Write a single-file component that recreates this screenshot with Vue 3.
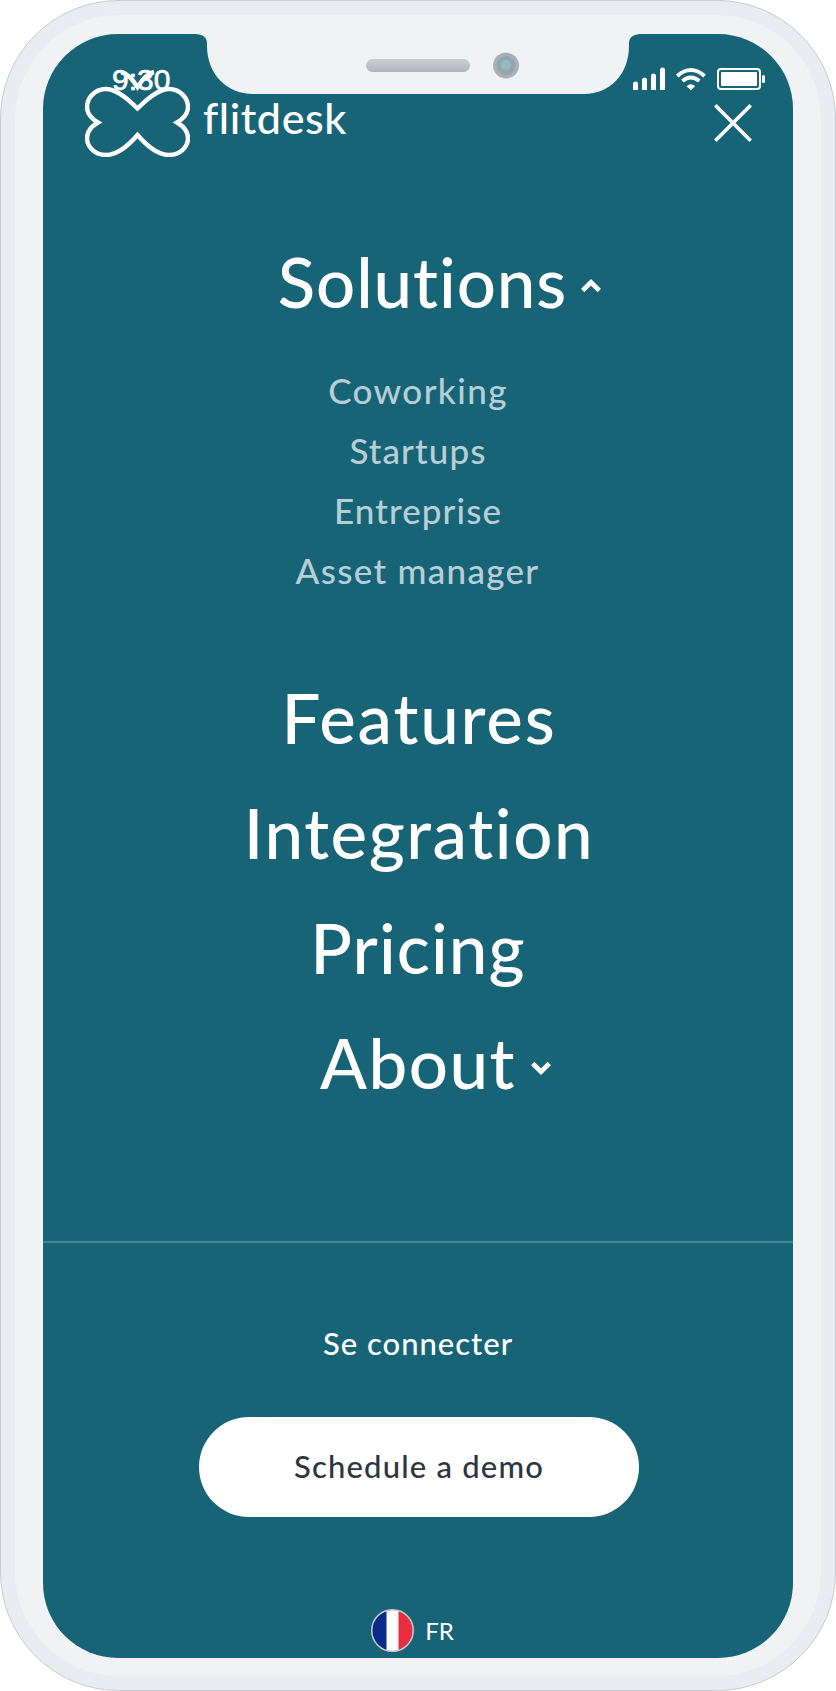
<script setup>
const solutions = [
  { label: 'Coworking', key: 'coworking' },
  { label: 'Startups', key: 'startups' },
  { label: 'Entreprise', key: 'entreprise' },
  { label: 'Asset manager', key: 'asset' },
]
const pages = [
  { label: 'Features', key: 'features' },
  { label: 'Integration', key: 'integration' },
  { label: 'Pricing', key: 'pricing' },
  { label: 'About', key: 'about', more: true },
]
</script>

<template>
  <div class="phone">
    <div class="bezel">
      <div class="screen">
        <header class="header">
          <div class="brand">
            <svg class="logo" width="105" height="90" viewBox="0 0 105 90" fill="none" stroke="#fff" stroke-width="4.400">
              <path d="M52.500 41.500 C43 32 32 22 21 22 C10 22 2 31 2 40 C2 47 7 52 13 55.500 C7 59 2 64 2 71 C2 80 10 88 21 88 C32 88 43 79 52.500 68 C62 79 73 88 84 88 C95 88 103 80 103 71 C103 64 98 59 92 55.500 C98 52 103 47 103 40 C103 31 95 22 84 22 C73 22 62 32 52.500 41.500Z" />
              <path d="M36 5 C43 6.500 48 13 52.500 20 C57 13 62 6.500 69 5" />
            </svg>
            <span class="wordmark">flitdesk</span>
          </div>
          <svg class="close" width="38" height="38" viewBox="0 0 38 38" stroke="#fff" stroke-width="3.600">
            <path d="M1.300 1.300 36.700 36.700M36.700 1.300 1.300 36.700" />
          </svg>
        </header>

        <nav class="menu">
          <a class="item open solutions"><span>Solutions</span>
            <svg class="chevron" width="20" height="14" viewBox="0 0 20 14"><path d="M1.700 11.500 10 3.300 18.300 11.500" /></svg>
          </a>
          <div class="submenu">
            <a v-for="s in solutions" :key="s.key" :class="s.key"><span>{{ s.label }}</span></a>
          </div>
          <a v-for="p in pages" :key="p.key" class="item" :class="p.key"><span>{{ p.label }}</span>
            <svg v-if="p.more" class="chevron" width="20" height="14" viewBox="0 0 20 14"><path d="M1.700 2.500 10 10.700 18.300 2.500" /></svg>
          </a>
        </nav>

        <footer class="footer">
          <a class="login">Se connecter</a>
          <button class="demo">Schedule a demo</button>
          <div class="lang">
            <svg width="43" height="43" viewBox="0 0 43 43">
              <clipPath id="disc"><circle cx="21.500" cy="21.500" r="20.500" /></clipPath>
              <g clip-path="url(#disc)">
                <rect width="43" height="43" fill="#fff" />
                <rect width="15.500" height="43" fill="#0b2a8c" />
                <rect x="27.500" width="16" height="43" fill="#e62e40" />
              </g>
              <circle cx="21.500" cy="21.500" r="20.800" fill="none" stroke="#c9ced6" stroke-width="1.400" />
            </svg>
            <span>FR</span>
          </div>
        </footer>
      </div>

      <svg class="notch" width="442" height="62" viewBox="197 33 442 62">
        <defs>
          <linearGradient id="speaker" x1="0" y1="0" x2="0" y2="1">
            <stop offset="0.300" stop-color="#c3cbd0" /><stop offset="1" stop-color="#b0b3b9" />
          </linearGradient>
        </defs>
        <path d="M197 33 V34.300 C203 34.300 207 38 207 43 V46 C207 74 227 94 253 94 H584 C610 94 629 74 629 46 V43 C629 38 633 34.300 639 34.300 V33Z" fill="#f1f2f4" />
        <rect x="366" y="59" width="104" height="13" rx="6.500" fill="url(#speaker)" />
        <circle cx="506" cy="65.500" r="13" fill="#adafb5" />
        <circle cx="506" cy="65.500" r="9.500" fill="#90a7b0" />
        <circle cx="506" cy="65" r="5" fill="#9bb8bf" />
      </svg>
      <span class="clock">9:30</span>
      <svg class="status" width="134" height="24" viewBox="632 67 134 24" fill="#fff">
        <path d="M633 90v-6a2 2 0 0 1 5 0v6zM642 90v-10a2 2 0 0 1 5 0v10zM651 90v-14a2 2 0 0 1 5 0v14zM660 90v-20a2 2 0 0 1 5 0v20z" />
        <g fill="none" stroke="#fff" stroke-width="3.800">
          <path d="M677.300 76 Q690.800 64 704.500 76" /><path d="M682.500 81 Q690.800 74 699.300 81" />
        </g>
        <path d="M686.500 86.200 Q690.800 82.500 695.200 86.200 L690.800 90.300Z" />
        <rect x="718" y="69" width="42" height="20" rx="3" fill="none" stroke="#fff" stroke-width="2" />
        <rect x="721" y="72" width="36" height="14" rx="1" />
        <rect x="762" y="75" width="3" height="8" rx="1.500" />
      </svg>
    </div>
  </div>
</template>

<style>
body { background: #fff; }
</style>

<style scoped>
.phone {
  box-sizing: border-box;
  width: 836px;
  height: 1691px;
  padding: 14px;
  border: 1.500px solid #c9cace;
  border-radius: 119px;
  background: #ebecf1;
  font-family: Lato, "Noto Sans", sans-serif;
  font-weight: 500;
  color: #fff;
}
.bezel {
  position: relative;
  box-sizing: border-box;
  height: 1661px;
  padding: 19px 28px 18px;
  border-radius: 104px;
  background: #f1f2f4;
}
.screen {
  box-sizing: border-box;
  display: flex;
  flex-direction: column;
  height: 1624px;
  border-radius: 75px;
  background: #186477;
  overflow: hidden;
}
.header {
  display: flex;
  justify-content: space-between;
  height: 190px;
  padding: 0 41px 0 42px;
}
.brand { display: flex; align-items: flex-start; }
.logo { margin-top: 33px; }
.wordmark {
  margin: 57px 0 0 13px;
  font-size: 43px;
  line-height: 54px;
  letter-spacing: 0.6px;
}
.close { margin-top: 70px; }
.menu {
  display: flex;
  flex-direction: column;
  align-items: center;
  height: 1017px;
}
.item {
  position: relative;
  font-size: 69px;
  line-height: 115px;
  letter-spacing: 1.5px;
}
.solutions { margin-left: 9px; letter-spacing: 0.9px; }
.features { margin-left: 2px; letter-spacing: 1.8px; }
.integration { margin-left: 2px; letter-spacing: 1.6px; }
.pricing { letter-spacing: 1.1px; }
.chevron {
  position: absolute;
  top: 56px;
  left: calc(100% + 15px);
  fill: none;
  stroke: #fff;
  stroke-width: 4.600;
}
.solutions .chevron {
  top: 55px;
  left: calc(100% + 14px);
}
.submenu {
  display: flex;
  flex-direction: column;
  align-items: center;
  padding: 21px 0 60px;
  font-size: 35px;
  line-height: 60px;
  letter-spacing: 1.1px;
  color: #b7ced5;
}
.coworking { letter-spacing: 1.4px; }
.asset { margin-right: 1px; letter-spacing: 1.3px; }
.footer {
  display: flex;
  flex-direction: column;
  align-items: center;
  border-top: 2px solid #488492;
}
.login {
  margin-top: 70px;
  font-size: 31px;
  line-height: 60px;
  letter-spacing: 1px;
}
.demo {
  width: 440px;
  height: 100px;
  margin: 44px 0 0 2px;
  padding: 0 0 3px;
  border: 0;
  border-radius: 50px;
  background: #fff;
  color: #2d3540;
  font: 500 31px Lato, sans-serif;
  letter-spacing: 1.2px;
}
.lang {
  display: flex;
  align-items: center;
  gap: 11px;
  margin: 92px 11px 0 0;
  font-size: 24px;
  font-weight: 400;
}
.notch {
  position: absolute;
  left: 182px;
  top: 18px;
}
.clock {
  position: absolute;
  left: 97px;
  top: 48px;
  font: 30px/34px "Liberation Sans", sans-serif;
  -webkit-text-stroke: 0.6px #fff;
}
.status {
  position: absolute;
  left: 617px;
  top: 52px;
}
</style>
